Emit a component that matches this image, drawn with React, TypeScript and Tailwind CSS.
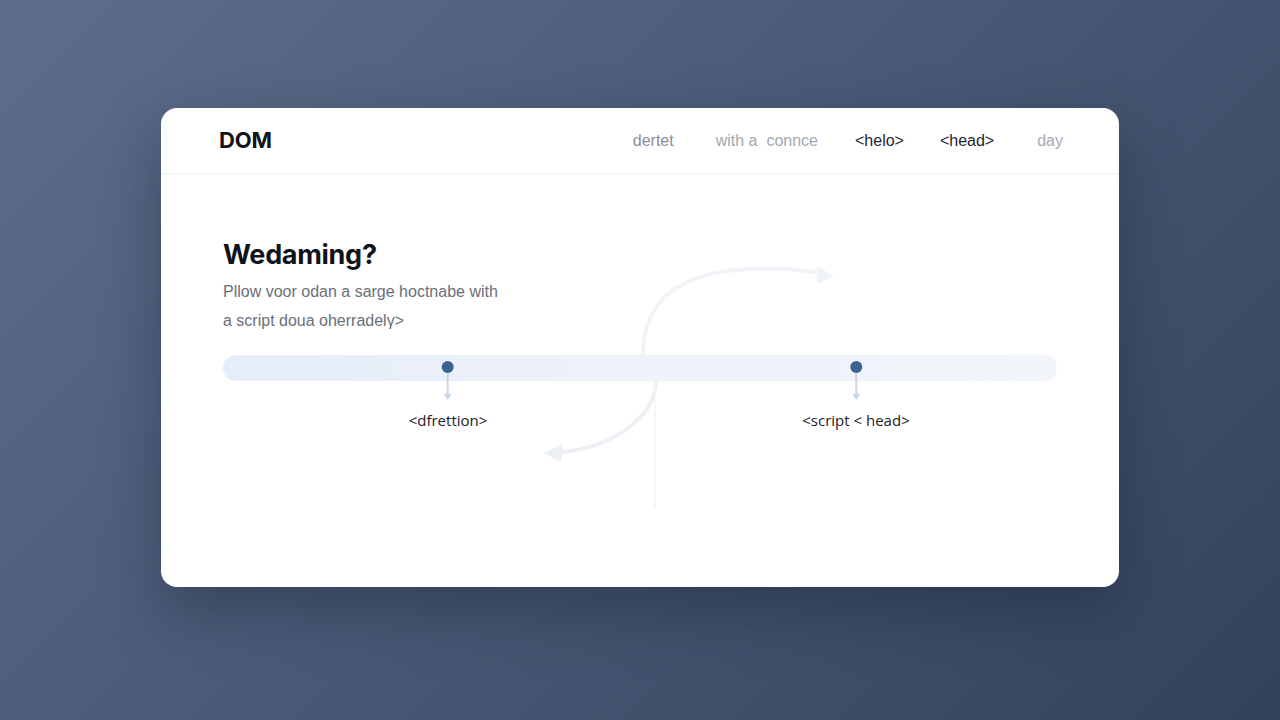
import React from 'react';

const navItems = [
  { label: 'dertet', className: 'text-[#8b9099]' },
  { label: 'with a  connce', className: 'text-[#a3a7ae] whitespace-pre ml-[42px]' },
  { label: '<helo>', className: 'text-[#23272f] ml-[37px]' },
  { label: '<head>', className: 'text-[#23272f] ml-[36px]' },
  { label: 'day', className: 'text-[#a6aab1] ml-[43px]' },
];

const markers = [
  { left: 225, label: '<dfrettion>' },
  { left: 633, label: '<script < head>' },
];

const App: React.FC = () => {
  return (
    <div className="w-full h-screen overflow-hidden bg-[linear-gradient(135deg,#5d6e8a_0%,#4b5b77_45%,#33425c_100%)] flex justify-center pt-[108px]">
      <div className="relative w-[958px] h-[479px] bg-white rounded-[16px] shadow-[0_24px_60px_rgba(15,23,42,0.35)] overflow-hidden">
        {/* ヘッダー */}
        <div className="h-[66px] flex items-center justify-between pl-[58px] pr-[56px] border-b border-[#eef0f3]">
          <div className="font-['Inter',sans-serif] font-bold text-[22px] text-[#111318] tracking-[-0.2px]">
            DOM
          </div>
          <nav className="flex items-center font-['Liberation_Sans',Arial,sans-serif] text-[16px]">
            {navItems.map((item) => (
              <span key={item.label} className={item.className}>
                {item.label}
              </span>
            ))}
          </nav>
        </div>

        {/* 背景の矢印 */}
        <svg
          className="absolute left-0 top-0 pointer-events-none"
          width="958"
          height="479"
          viewBox="0 0 958 479"
          fill="none"
        >
          <path
            d="M482 246 C 482 200, 510 168, 575 162 C 610 159, 640 161, 662 166"
            stroke="#f0f3f7"
            strokeWidth="4"
            strokeLinecap="round"
          />
          <path d="M656 158 L 673 168 L 656 176 Z" fill="#f0f3f7" />
          <path
            d="M495 272 C 495 310, 450 340, 400 344"
            stroke="#ecf0f5"
            strokeWidth="4"
            strokeLinecap="round"
          />
          <path d="M383 345 L 402 336 L 400 354 Z" fill="#ecf0f5" />
          <path d="M494 272 L 494 400" stroke="#f3f5f8" strokeWidth="1.5" />
        </svg>

        {/* 本文 */}
        <div className="relative px-[62px] pt-[64px]">
          <h1 className="font-['Inter',sans-serif] font-bold text-[27px] leading-[33px] text-[#10131a] tracking-[-0.3px]">
            Wedaming?
          </h1>
          <p className="mt-[6px] font-['Liberation_Sans',Arial,sans-serif] text-[16px] leading-[29px] text-[#6a6f77]">
            Pllow voor odan a sarge hoctnabe with
            <br />
            a script doua oherradelγ&gt;
          </p>

          <div className="relative mt-[20px] h-[26px] w-[834px] rounded-full bg-[linear-gradient(90deg,#e6edf9_0%,#eef2f9_50%,#f2f5fa_100%)]">
            {markers.map((m) => (
              <div
                key={m.label}
                className="absolute top-[6px] flex flex-col items-center -translate-x-1/2"
                style={{ left: m.left }}
              >
                <div className="w-[12px] h-[12px] rounded-full bg-[#3c6193]" />
                <div className="w-[2px] h-[22px] bg-[#c9d6e8]" />
                <svg width="8" height="6" viewBox="0 0 8 6" className="-mt-[1px]">
                  <path d="M0 0 L8 0 L4 6 Z" fill="#c9d6e8" />
                </svg>
                <div className="mt-[9px] whitespace-nowrap font-['Open_Sans',sans-serif] text-[15px] text-[#1d2128]">
                  {m.label}
                </div>
              </div>
            ))}
          </div>
        </div>
      </div>
    </div>
  );
};

export default App;
